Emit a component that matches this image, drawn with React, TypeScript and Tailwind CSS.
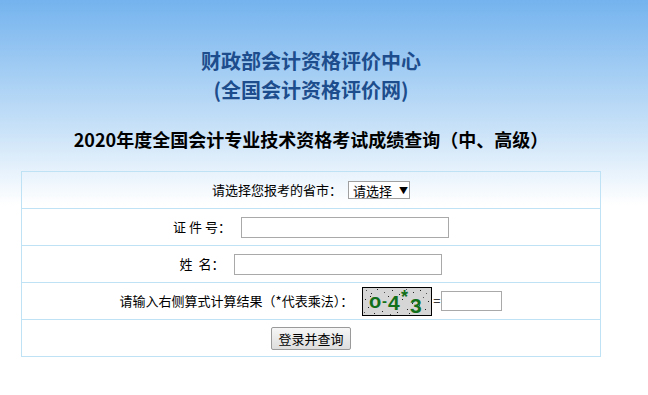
const font = "font-['Microsoft_YaHei','Noto_Sans_CJK_SC',sans-serif]";

function Captcha() {
  // noise dots scattered over the captcha image
  const dots = [
    [4, 3], [9, 6], [15, 2], [22, 5], [30, 3], [37, 7], [44, 2], [51, 5], [58, 3], [64, 6],
    [3, 12], [6, 20], [2, 25], [12, 26], [20, 24], [28, 27], [35, 25], [47, 26], [55, 24], [63, 22],
    [66, 14], [61, 10], [40, 12], [26, 9], [17, 15], [50, 16], [8, 9], [57, 18], [33, 18], [45, 22],
  ];
  const g = { fill: "#13701a", fontWeight: "bold", fontFamily: "Liberation Sans, Arial, sans-serif" } as const;
  return (
    <svg width="70" height="29" viewBox="0 0 70 29" className="block">
      <rect x="0.5" y="0.5" width="69" height="28" fill="#d6d6d6" stroke="#000" />
      {dots.map(([x, y], i) => (
        <rect key={i} x={x} y={y} width="1" height="1" fill={i % 3 === 0 ? "#555" : "#222"} />
      ))}
      <text x="7" y="21" fontSize="20" {...g}>o</text>
      <text x="20" y="19" fontSize="15" {...g}>-</text>
      <text x="26" y="23" fontSize="21" {...g}>4</text>
      <text x="39" y="16" fontSize="18" {...g}>*</text>
      <text x="48" y="26" fontSize="21" {...g}>3</text>
    </svg>
  );
}

function Row({ children }: { children: React.ReactNode }) {
  return (
    <div className="h-[37px] border-b border-[#bfe3f4] flex items-center justify-center">
      {children}
    </div>
  );
}

export default function App() {
  return (
    <div
      className={`min-h-[395px] bg-[linear-gradient(to_bottom,#74b3ee_0px,#c9e2f8_130px,#ffffff_205px)] ${font} text-[13px] text-black`}
    >
      <div className="w-[580px] ml-[21px] pt-[46px]">
        <div className="text-center text-[20px] leading-[29px] font-bold text-[#1d4d8c]">
          <div>财政部会计资格评价中心</div>
          <div>(全国会计资格评价网)</div>
        </div>
        <h1 className="mt-[23px] text-center text-[18px] leading-[24px] font-bold text-black">
          2020年度全国会计专业技术资格考试成绩查询（中、高级）
        </h1>

        <div className="mt-[20px] border-t border-x border-[#bfe3f4]">
          <Row>
            <span className="mr-[6px]">请选择您报考的省市：</span>
            <span className="flex items-center h-[18px] w-[62px] border border-[#a0a0a0] bg-white pl-[4px] leading-none">
              <span>请选择</span>
              <span className="ml-[7px] text-[9px]">▼</span>
            </span>
          </Row>
          <Row>
            <span className="mr-[10px]">证&nbsp;件&nbsp;号：</span>
            <input className="h-[21px] w-[208px] border border-[#a9a9a9] bg-white outline-none" />
          </Row>
          <Row>
            <span className="mr-[10px]">姓&nbsp;&nbsp;名：</span>
            <input className="h-[21px] w-[208px] border border-[#a9a9a9] bg-white outline-none" />
          </Row>
          <Row>
            <span className="mr-[9px]">请输入右侧算式计算结果（*代表乘法）：</span>
            <Captcha />
            <span className="mx-[1px]">=</span>
            <input className="h-[20px] w-[61px] border border-[#a9a9a9] bg-white outline-none" />
          </Row>
          <Row>
            <button className="h-[23px] w-[80px] border border-[#9a9a9a] rounded-[2px] bg-[linear-gradient(to_bottom,#f6f6f6,#dddddd)] text-[13px] leading-none">
              登录并查询
            </button>
          </Row>
        </div>
      </div>
    </div>
  );
}
